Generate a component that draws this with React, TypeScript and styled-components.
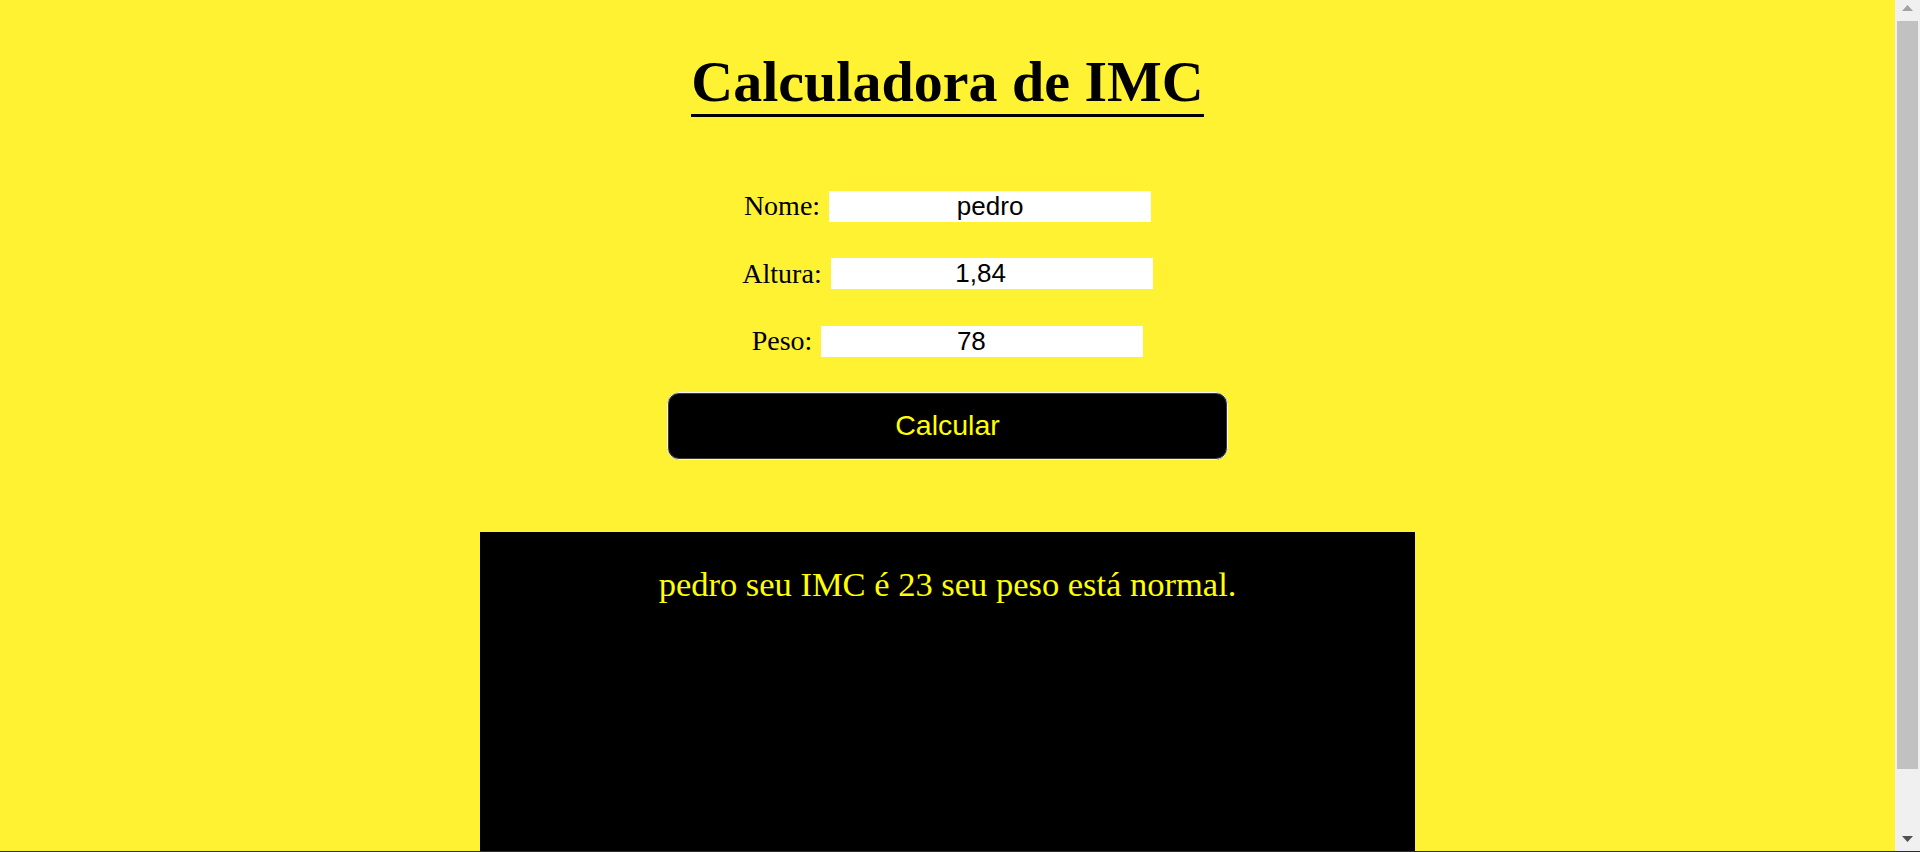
import React from "react";
import styled, { createGlobalStyle } from "styled-components";

const GlobalStyle = createGlobalStyle`
  html {
    overflow: hidden;
    background: #fff232;
  }
  body {
    margin: 8px;
    background: #fff232;
    font-family: "Liberation Serif", "Times New Roman", serif;
    color: #000;
  }
`;

const Main = styled.main`
  margin-right: 25px;
  display: flex;
  flex-direction: column;
  align-items: center;
`;

const Title = styled.h1`
  display: inline-block;
  margin: 42px 0 0;
  font-size: 58px;
  font-weight: bold;
  line-height: 64px;
  border-bottom: 3px solid #000;
`;

const Form = styled.form`
  margin-top: 73px;
  display: flex;
  flex-direction: column;
  align-items: center;
  gap: 35.5px;
`;

const Row = styled.div`
  display: flex;
  align-items: center;
  gap: 9px;
  font-size: 28px;
  line-height: 32px;
`;

const Label = styled.label`
  white-space: nowrap;
`;

const Input = styled.input<{ $numeric?: boolean }>`
  box-sizing: border-box;
  width: 322px;
  height: 31px;
  border: none;
  padding: 0 ${(p) => (p.$numeric ? "24px" : "2px")} 0 2px;
  margin: 0;
  background: #fff;
  font-family: "Liberation Sans", Arial, sans-serif;
  font-size: 26px;
  text-align: center;
  color: #000;
  outline: none;
`;

const Button = styled.button`
  box-sizing: border-box;
  margin-top: 34.5px;
  width: 561px;
  height: 68px;
  background: #000;
  color: #ffff00;
  border: 1px solid #f4f4f4;
  box-shadow: inset 0 0 0 1px #3c3c3c;
  border-radius: 12px;
  font-family: "Liberation Sans", Arial, sans-serif;
  font-size: 28.5px;
  cursor: pointer;
`;

const Result = styled.section`
  margin-top: 72px;
  width: 935px;
  height: 387px;
  background: #000;
  color: #ffff00;
  text-align: center;
  box-sizing: border-box;
  padding-top: 33px;
`;

const ResultText = styled.p`
  margin: 0;
  font-size: 34.5px;
  line-height: 1.15;
`;

/* Window chrome seen in the screenshot: a classic vertical scrollbar and a thin frame line */
const Scrollbar = styled.div`
  position: fixed;
  top: 0;
  right: 0;
  width: 25px;
  height: 100vh;
  background: #f0f0f0;
`;

const Thumb = styled.div`
  position: absolute;
  top: 21px;
  left: 2px;
  right: 2px;
  bottom: 83px;
  background: #c1c1c1;
`;

const Arrow = styled.svg<{ $bottom?: boolean }>`
  position: absolute;
  left: 7px;
  width: 11px;
  height: 6px;
  ${(p) => (p.$bottom ? "bottom: 10px;" : "top: 5px;")}
`;

const FrameLine = styled.div`
  position: fixed;
  left: 0;
  right: 0;
  bottom: 0;
  height: 1px;
  background: #2c2c2c;
`;

export default function App() {
  return (
    <>
      <GlobalStyle />
      <Main>
        <Title>Calculadora de IMC</Title>
        <Form onSubmit={(e) => e.preventDefault()}>
          <Row>
            <Label htmlFor="nome">Nome:</Label>
            <Input id="nome" defaultValue="pedro" />
          </Row>
          <Row>
            <Label htmlFor="altura">Altura:</Label>
            <Input id="altura" $numeric inputMode="decimal" defaultValue="1,84" />
          </Row>
          <Row>
            <Label htmlFor="peso">Peso:</Label>
            <Input id="peso" $numeric inputMode="decimal" defaultValue="78" />
          </Row>
        </Form>
        <Button type="button">Calcular</Button>
        <Result>
          <ResultText>pedro seu IMC é 23 seu peso está normal.</ResultText>
        </Result>
      </Main>
      <Scrollbar aria-hidden="true">
        <Arrow viewBox="0 0 11 6">
          <path d="M0 6 L5.5 0 L11 6 Z" fill="#a3a3a3" />
        </Arrow>
        <Thumb />
        <Arrow $bottom viewBox="0 0 11 6">
          <path d="M0 0 L11 0 L5.5 6 Z" fill="#505050" />
        </Arrow>
      </Scrollbar>
      <FrameLine />
    </>
  );
}
